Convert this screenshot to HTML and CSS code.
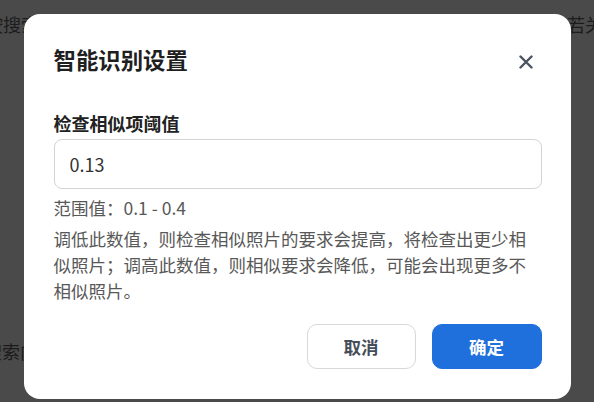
FILE: index.html
```html
<!DOCTYPE html>
<html lang="zh-CN">
<head>
<meta charset="utf-8">
<title>智能识别设置</title>
<link rel="stylesheet" href="styles.css">
</head>
<body>
<div class="page">
  <div class="page-row">
    <span class="page-left top-left">按搜索</span>
    <span class="page-right">若关</span>
  </div>
  <div class="page-row">
    <span class="page-left bottom-left">搜索内</span>
  </div>
</div>
<div class="overlay">
  <div class="modal">
    <div class="modal-header">
      <h2 class="modal-title">智能识别设置</h2>
      <button class="close-btn" aria-label="关闭">
        <svg width="14" height="14" viewBox="0 0 14 14"><path d="M1.5 1.5 L12.5 12.5 M12.5 1.5 L1.5 12.5" stroke="#4b5360" stroke-width="2.4" stroke-linecap="round" fill="none"/></svg>
      </button>
    </div>
    <label class="field-label" for="th">检查相似项阈值</label>
    <input id="th" class="field-input" type="text" value="0.13">
    <p class="help">范围值：0.1 - 0.4</p>
    <p class="help help-desc">调低此数值，则检查相似照片的要求会提高，将检查出更少相似照片；调高此数值，则相似要求会降低，可能会出现更多不相似照片。</p>
    <div class="modal-footer">
      <button class="btn btn-cancel">取消</button>
      <button class="btn btn-ok">确定</button>
    </div>
  </div>
</div>
</body>
</html>
```

FILE: styles.css
```css
* { box-sizing: border-box; }
html, body {
  margin: 0;
  padding: 0;
  height: 100%;
}
body {
  background: #4a4a4a;
  font-family: "Noto Sans CJK SC", "Noto Sans", sans-serif;
  overflow: hidden;
}
.page {
  height: 100vh;
  display: flex;
  flex-direction: column;
  justify-content: space-between;
  padding: 13px 0 40px;
  color: #1c1c1c;
  font-size: 18px;
  line-height: 22px;
}
.page-row {
  display: flex;
  justify-content: space-between;
  white-space: nowrap;
}
.top-left { margin-left: -15px; }
.bottom-left { margin-left: -16px; }
.page-right { margin-right: -9px; }

.overlay {
  position: fixed;
  inset: 0;
  display: flex;
  justify-content: center;
  align-items: flex-start;
  padding-top: 14px;
}
.modal {
  width: 547px;
  height: 385px;
  background: #ffffff;
  border-radius: 16px;
  padding: 30px 29px 30px 30px;
  display: flex;
  flex-direction: column;
}
.modal-header {
  display: flex;
  justify-content: space-between;
  align-items: center;
  height: 30px;
}
.modal-title {
  margin: 0;
  font-size: 22.4px;
  line-height: 30px;
  font-weight: 700;
  color: #1f1f1f;
}
.close-btn {
  width: 28px;
  height: 28px;
  margin: 6px 2px 0 0;
  padding: 0;
  border: 0;
  background: transparent;
  display: flex;
  align-items: center;
  justify-content: center;
}
.field-label {
  margin-top: 36px;
  font-size: 18px;
  line-height: 26px;
  font-weight: 700;
  color: #222222;
}
.field-input {
  margin-top: 3px;
  height: 50px;
  width: 100%;
  border: 1px solid #d4d4d4;
  border-radius: 8px;
  padding: 0 15px;
  font-family: inherit;
  font-size: 18px;
  color: #333333;
  outline: none;
}
.help {
  margin: 6px 0 0;
  font-size: 17.5px;
  line-height: 26px;
  color: #585858;
}
.help-desc { margin-top: 5px; }
.modal-footer {
  margin-top: auto;
  display: flex;
  justify-content: flex-end;
  gap: 16px;
}
.btn {
  height: 45px;
  border-radius: 10px;
  font-family: inherit;
  font-size: 17.5px;
  font-weight: 700;
  padding: 0;
}
.btn-cancel {
  width: 109px;
  background: #ffffff;
  border: 1px solid #d6d8dc;
  color: #464d5a;
}
.btn-ok {
  width: 110px;
  background: #1f6fdc;
  border: 1px solid #1f6fdc;
  color: #ffffff;
}
```
